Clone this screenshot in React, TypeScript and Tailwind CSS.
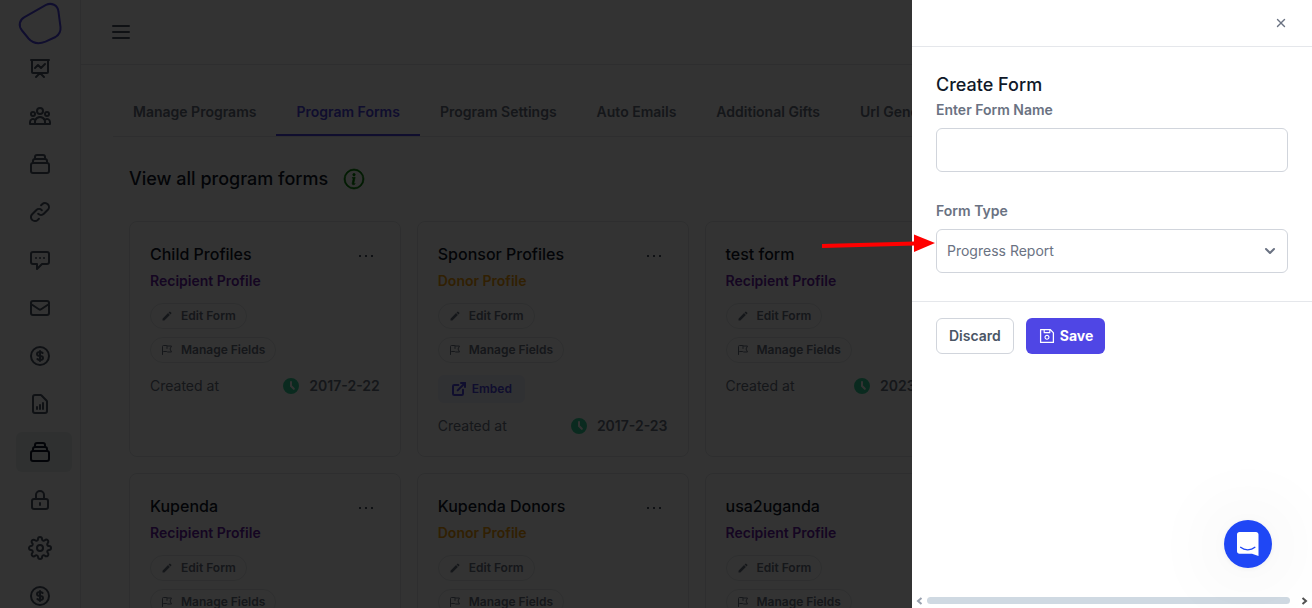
import React from "react";
import {
  HiChevronDown,
  HiClock,
  HiOutlineChatAlt,
  HiOutlineCollection,
  HiOutlineCurrencyDollar,
  HiOutlineDocumentReport,
  HiOutlineFlag,
  HiOutlineLink,
  HiOutlineLockClosed,
  HiOutlineMail,
  HiOutlineMenu,
  HiOutlinePresentationChartLine,
  HiOutlineUserGroup,
  HiX,
} from "react-icons/hi";
import { BsInfoCircle } from "react-icons/bs";
import { MdEdit } from "react-icons/md";
import { FiExternalLink, FiSettings } from "react-icons/fi";
import { AiOutlineSave } from "react-icons/ai";
import type { IconType } from "react-icons";

type NavItem = { label: string; icon: IconType; active?: boolean };

const navItems: NavItem[] = [
  { label: "Dashboard", icon: HiOutlinePresentationChartLine },
  { label: "People", icon: HiOutlineUserGroup },
  { label: "Collections", icon: HiOutlineCollection },
  { label: "Links", icon: HiOutlineLink },
  { label: "Messages", icon: HiOutlineChatAlt },
  { label: "Mail", icon: HiOutlineMail },
  { label: "Payments", icon: HiOutlineCurrencyDollar },
  { label: "Reports", icon: HiOutlineDocumentReport },
  { label: "Programs", icon: HiOutlineCollection, active: true },
  { label: "Security", icon: HiOutlineLockClosed },
  { label: "Settings", icon: FiSettings },
  { label: "Billing", icon: HiOutlineCurrencyDollar },
];

const tabs = [
  "Manage Programs",
  "Program Forms",
  "Program Settings",
  "Auto Emails",
  "Additional Gifts",
  "Url Generator",
];

type ProgramForm = {
  name: string;
  kind: "Recipient Profile" | "Donor Profile";
  created: string;
};

const forms: ProgramForm[][] = [
  [
    { name: "Child Profiles", kind: "Recipient Profile", created: "2017-2-22" },
    { name: "Sponsor Profiles", kind: "Donor Profile", created: "2017-2-23" },
    { name: "test form", kind: "Recipient Profile", created: "2023-4-26" },
  ],
  [
    { name: "Kupenda", kind: "Recipient Profile", created: "2017-3-14" },
    { name: "Kupenda Donors", kind: "Donor Profile", created: "2017-3-14" },
    { name: "usa2uganda", kind: "Recipient Profile", created: "2017-4-12" },
  ],
];

function Sidebar() {
  return (
    <aside className="flex w-[81px] shrink-0 flex-col border-r border-gray-200">
      <a href="#home" aria-label="Home" className="flex h-12 shrink-0 items-center justify-center">
        <svg className="size-12 text-[#4f46e5]" viewBox="-1 0 48 48" fill="none" stroke="currentColor" strokeWidth="2">
          <path d="M29 4.9C34 2.5 41 4.500 41.500 12L43.500 27C44 32 42.500 34.500 38.500 37L28.500 41.600C22 44.300 16 43.500 11.500 38.500L5 30.500C1 25.500 2.500 20 7.500 17.200L29 4.900Z" />
        </svg>
      </a>
      <nav className="flex flex-col gap-2 pr-2 pl-4">
        {navItems.map(({ label, icon: Icon, active }) => (
          <a
            key={label}
            href="#nav"
            aria-label={label}
            className={
              active
                ? "flex h-10 shrink-0 items-center rounded-md bg-[#e9f1f0] px-3 text-gray-900"
                : "flex h-10 shrink-0 items-center rounded-md px-3 text-gray-600"
            }
          >
            <Icon className="size-6" />
          </a>
        ))}
      </nav>
    </aside>
  );
}

function FormCard({ form }: { form: ProgramForm }) {
  const donor = form.kind === "Donor Profile";
  return (
    <article className="flex min-h-[236px] flex-col items-start rounded-lg border border-gray-200 px-5 pt-5 pb-4">
      <div className="flex h-6 w-full items-end justify-between pr-1">
        <h3 className="text-base font-medium text-gray-900">{form.name}</h3>
        <button aria-label={"Options for " + form.name} className="text-gray-600">
          <svg className="size-5" viewBox="0 0 20 20" fill="currentColor">
            <path d="M3 9h2v2H3zM9 9h2v2H9zM15 9h2v2h-2z" />
          </svg>
        </button>
      </div>
      <p
        className={
          donor
            ? "mt-1 text-sm leading-[22px] font-semibold text-[#f59e0b]"
            : "mt-1 text-sm leading-[22px] font-semibold text-[#6b21a8]"
        }
      >
        {form.kind}
      </p>
      <button className="mt-[11px] flex h-[26px] items-center gap-2 rounded-full border border-gray-200 px-[10px] text-xs font-semibold text-gray-500">
        <MdEdit className="size-3" />
        Edit Form
      </button>
      <button className="mt-2 flex h-[26px] items-center gap-2 rounded-full border border-gray-200 px-[10px] text-xs font-semibold text-gray-500">
        <HiOutlineFlag className="size-3" />
        Manage Fields
      </button>
      {donor && (
        <button className="mt-3 flex h-7 items-center gap-[5px] rounded-md bg-[#eef2ff] px-[13px] text-xs font-semibold text-[#4f46e5]">
          <FiExternalLink className="size-4" strokeWidth={3} />
          Embed
        </button>
      )}
      <div className="mt-[13px] flex w-full items-center justify-between text-sm text-gray-500">
        <span>Created at</span>
        <span className="flex items-center gap-2 font-semibold">
          <HiClock className="size-5 text-[#34d399]" />
          {form.created}
        </span>
      </div>
    </article>
  );
}

function ProgramFormsPage() {
  return (
    <div className="flex min-w-0 flex-1 flex-col">
      <header className="flex h-[65px] shrink-0 items-center border-b border-gray-200 px-7">
        <button aria-label="Toggle menu" className="text-gray-600">
          <HiOutlineMenu className="size-6" />
        </button>
      </header>
      <main className="px-8 pt-6">
        <div role="tablist" className="flex h-12 border-b border-gray-200">
          {tabs.map((tab) => (
            <button
              key={tab}
              role="tab"
              aria-selected={tab === "Program Forms"}
              className={
                tab === "Program Forms"
                  ? "border-b-2 border-[#4f46e5] px-5 text-sm font-semibold whitespace-nowrap text-[#4f46e5]"
                  : "border-b-2 border-transparent px-5 text-sm font-semibold whitespace-nowrap text-gray-500"
              }
            >
              {tab}
            </button>
          ))}
        </div>
        <section className="px-4 pt-7">
          <div className="flex h-7 items-center gap-4">
            <h2 className="text-lg font-medium text-gray-900">View all program forms</h2>
            <BsInfoCircle className="size-5 overflow-visible text-[#008000]" strokeWidth={0.5} />
          </div>
          <div className="mt-7 flex flex-col gap-4">
            {forms.map((row) => (
              <div key={row[0].name} className="grid grid-cols-4 gap-4">
                {row.map((form) => (
                  <FormCard key={form.name} form={form} />
                ))}
              </div>
            ))}
          </div>
        </section>
      </main>
    </div>
  );
}

function CreateFormDrawer() {
  return (
    <div role="dialog" aria-labelledby="drawer-title" className="fixed inset-y-0 right-0 flex w-[400px] flex-col bg-white">
      <div className="flex h-[47px] shrink-0 items-center justify-end border-b border-gray-200 px-6">
        <button aria-label="Close" className="text-gray-500">
          <HiX className="size-[14px]" />
        </button>
      </div>
      <form className="flex flex-1 flex-col" onSubmit={(event) => event.preventDefault()}>
        <div className="flex flex-col px-6 pt-6 pb-7">
          <h2 id="drawer-title" className="text-lg font-medium text-gray-900">
            Create Form
          </h2>
          <label htmlFor="form-name" className="text-sm leading-[22px] font-semibold text-gray-500">
            Enter Form Name
          </label>
          <input id="form-name" type="text" className="mt-[7px] h-11 rounded-md border border-gray-300 px-3 text-sm text-gray-600" />
          <label htmlFor="form-type" className="mt-7 text-sm leading-[22px] font-semibold text-gray-500">
            Form Type
          </label>
          <div className="relative mt-[7px]">
            <select
              id="form-type"
              defaultValue="progress"
              className="h-11 w-full appearance-none rounded-md border border-gray-300 bg-white px-[10px] text-sm text-gray-500"
            >
              <option value="progress">Progress Report</option>
            </select>
            <HiChevronDown className="pointer-events-none absolute top-3 right-2 size-5 text-gray-500" />
            <svg className="pointer-events-none absolute top-1 right-full h-5 w-[114px]" viewBox="0 0 114 20">
              <path d="M0 13L93 10.500" stroke="#ff0000" strokeWidth="4" />
              <path d="M92 1.500L113 10L92 19Z" fill="#ff0000" />
            </svg>
          </div>
        </div>
        <div className="flex gap-3 border-t border-gray-200 px-6 pt-4">
          <button type="button" className="h-9 rounded-md border border-gray-300 px-3 text-sm font-semibold text-gray-600">
            Discard
          </button>
          <button type="submit" className="flex h-9 items-center gap-1 rounded-md bg-[#4f46e5] px-3 text-sm font-bold text-white">
            <AiOutlineSave className="size-[18px]" />
            Save
          </button>
        </div>
      </form>
      <div aria-hidden="true" className="flex h-[15px] shrink-0 items-center gap-1 px-1">
        <svg className="h-2 w-[7px] text-gray-400" viewBox="0 0 7 8" fill="none" stroke="currentColor" strokeWidth="2">
          <path d="M5.500 1L2 4L5.500 7" />
        </svg>
        <div className="h-[7px] flex-1 rounded-full bg-[#cfd9e2]" />
        <svg className="ml-[7px] h-2 w-[7px] text-neutral-600" viewBox="0 0 7 8" fill="none" stroke="currentColor" strokeWidth="2">
          <path d="M1.500 1L5 4L1.500 7" />
        </svg>
      </div>
    </div>
  );
}

function ChatLauncher() {
  return (
    <button
      aria-label="Open chat"
      className="fixed right-10 bottom-10 flex size-12 items-center justify-center rounded-full bg-[#1f47f5] shadow-[0_1px_6px_rgba(0,0,0,0.06),0_2px_80px_rgba(0,0,0,0.12)]"
    >
      <svg className="size-6" viewBox="0 0 24 24" fill="none">
        <path d="M3.500 0H20C21.400 0 22.500 1 22.500 2.500V24L16 21.700H3.500C2 21.700 1 20.700 1 19.200V2.500C1 1 2 0 3.500 0Z" fill="#fff" />
        <path d="M4.600 15.300C8.500 18.600 15 18.600 18.900 15.300" stroke="#1f47f5" strokeWidth="1.300" strokeLinecap="round" />
      </svg>
    </button>
  );
}

export default function App() {
  return (
    <div className="flex h-screen overflow-hidden bg-white font-['Inter',sans-serif]">
      <Sidebar />
      <ProgramFormsPage />
      <div className="fixed inset-0 bg-black/80" />
      <CreateFormDrawer />
      <ChatLauncher />
    </div>
  );
}
